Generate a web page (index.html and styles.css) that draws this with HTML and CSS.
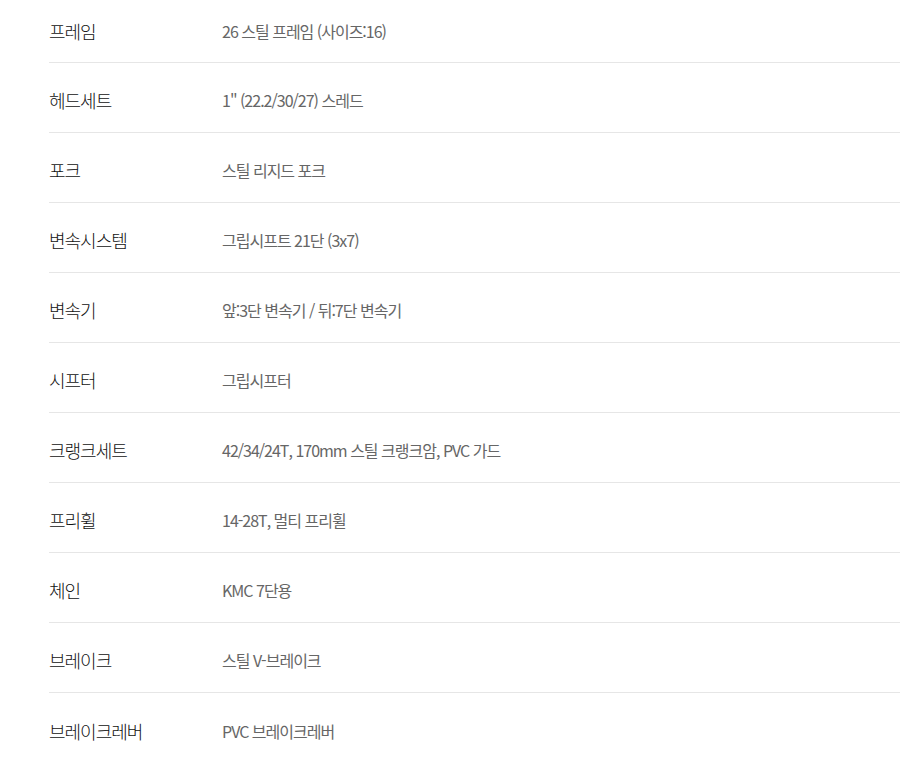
FILE: index.html
```html
<!DOCTYPE html>
<html lang="ko">
<head>
<meta charset="utf-8">
<link rel="stylesheet" href="styles.css">
</head>
<body>
<dl class="spec">
  <div class="row"><dt class="label">프레임</dt><dd class="value">26 스틸 프레임 (사이즈:16)</dd></div>
  <div class="row"><dt class="label">헤드세트</dt><dd class="value">1" (22.2/30/27) 스레드</dd></div>
  <div class="row"><dt class="label">포크</dt><dd class="value">스틸 리지드 포크</dd></div>
  <div class="row"><dt class="label">변속시스템</dt><dd class="value">그립시프트 21단 (3x7)</dd></div>
  <div class="row"><dt class="label">변속기</dt><dd class="value">앞:3단 변속기 / 뒤:7단 변속기</dd></div>
  <div class="row"><dt class="label">시프터</dt><dd class="value">그립시프터</dd></div>
  <div class="row"><dt class="label">크랭크세트</dt><dd class="value">42/34/24T, 170mm 스틸 크랭크암, PVC 가드</dd></div>
  <div class="row"><dt class="label">프리휠</dt><dd class="value">14-28T, 멀티 프리휠</dd></div>
  <div class="row"><dt class="label">체인</dt><dd class="value">KMC 7단용</dd></div>
  <div class="row"><dt class="label">브레이크</dt><dd class="value">스틸 V-브레이크</dd></div>
  <div class="row"><dt class="label">브레이크레버</dt><dd class="value">PVC 브레이크레버</dd></div>
</dl>
</body>
</html>
```
FILE: styles.css
```css
html, body {
  margin: 0;
  padding: 0;
  background: #fff;
}
body {
  font-family: "Noto Sans CJK KR", sans-serif;
}
.spec {
  margin: 0 0 0 49px;
  padding: 0;
}
.row {
  display: flex;
  align-items: center;
  box-sizing: border-box;
  height: 70px;
  padding-top: 5px;
  border-bottom: 1px solid #e6e6e6;
}
.row:first-child {
  height: 63px;
  padding-top: 0;
}
.row:last-child {
  border-bottom: none;
}
.label {
  width: 173px;
  flex: none;
  margin: 0;
  font-size: 18px;
  font-weight: 300;
  letter-spacing: -1px;
  line-height: 20px;
  color: #111;
}
.value {
  margin: 0;
  font-size: 16px;
  font-weight: 400;
  letter-spacing: -1px;
  line-height: 20px;
  color: #666;
}
```
